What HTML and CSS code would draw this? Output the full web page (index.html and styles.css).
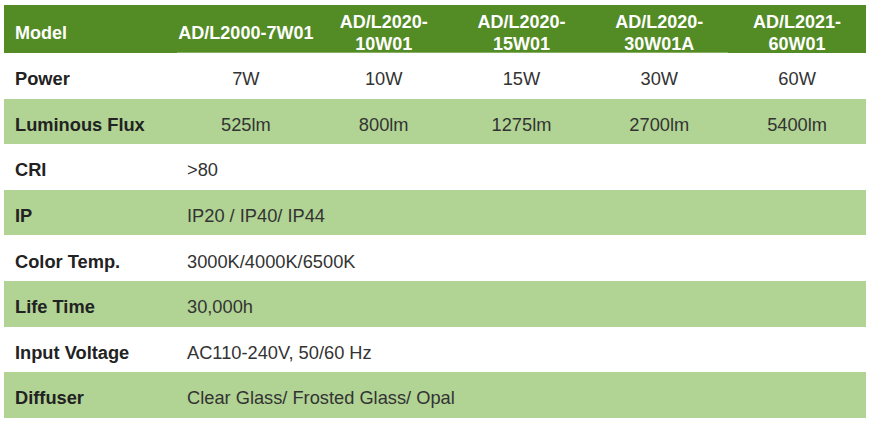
FILE: index.html
```html
<!DOCTYPE html>
<html>
<head>
<meta charset="utf-8">
<link rel="stylesheet" href="styles.css">
</head>
<body>
<table class="spec">
  <colgroup>
    <col class="c-label">
    <col class="c-val"><col class="c-val"><col class="c-val"><col class="c-val"><col class="c-val">
  </colgroup>
  <thead>
    <tr class="head">
      <th class="h-label"><div class="hd">Model</div></th>
      <th class="h-model line"><div class="hd">AD/L2000-7W01</div></th>
      <th class="h-model line"><div class="hd">AD/L2020-10W01</div></th>
      <th class="h-model line"><div class="hd">AD/L2020-15W01</div></th>
      <th class="h-model line"><div class="hd">AD/L2020-30W01A</div></th>
      <th class="h-model"><div class="hd">AD/L2021-60W01</div></th>
    </tr>
  </thead>
  <tbody>
    <tr class="white">
      <td class="label">Power</td>
      <td class="num">7W</td><td class="num">10W</td><td class="num">15W</td><td class="num">30W</td><td class="num">60W</td>
    </tr>
    <tr class="green">
      <td class="label">Luminous Flux</td>
      <td class="num">525lm</td><td class="num">800lm</td><td class="num">1275lm</td><td class="num">2700lm</td><td class="num">5400lm</td>
    </tr>
    <tr class="white">
      <td class="label">CRI</td>
      <td class="wide" colspan="5">&gt;80</td>
    </tr>
    <tr class="green">
      <td class="label">IP</td>
      <td class="wide" colspan="5">IP20 / IP40/ IP44</td>
    </tr>
    <tr class="white">
      <td class="label">Color Temp.</td>
      <td class="wide" colspan="5">3000K/4000K/6500K</td>
    </tr>
    <tr class="green">
      <td class="label">Life Time</td>
      <td class="wide" colspan="5">30,000h</td>
    </tr>
    <tr class="white">
      <td class="label">Input Voltage</td>
      <td class="wide" colspan="5">AC110-240V, 50/60 Hz</td>
    </tr>
    <tr class="green">
      <td class="label">Diffuser</td>
      <td class="wide" colspan="5">Clear Glass/ Frosted Glass/ Opal</td>
    </tr>
  </tbody>
</table>
</body>
</html>
```
FILE: styles.css
```css
html, body {
  margin: 0;
  padding: 0;
  background: #ffffff;
}

.spec {
  margin: 5px 0 0 4px;
  width: 862px;
  border-collapse: collapse;
  border-spacing: 0;
  table-layout: fixed;
  font-family: "Liberation Sans", Arial, sans-serif;
  font-size: 18.25px;
}

.c-label { width: 173px; }
.c-val { width: 137.8px; }

.head {
  background: #538b24;
  color: #ffffff;
}

.head th {
  padding: 8px 0 0 0;
  font-weight: bold;
  font-size: 18px;
  line-height: 22px;
  vertical-align: top;
  text-align: center;
}

.hd {
  height: 40px;
  display: flex;
  align-items: center;
  justify-content: center;
}

.head th.h-label {
  text-align: left;
  padding-left: 11px;
}

.head th.h-label .hd {
  justify-content: flex-start;
}

.head th.line {
  box-shadow: inset 0 -1px 0 #86b062;
}

.white { background: #ffffff; }
.green { background: #b1d394; }

tbody tr { height: 45.6px; }

tbody td {
  padding: 6px 0 0 0;
  vertical-align: middle;
  color: #333333;
  line-height: 21px;
}

td.label {
  font-weight: bold;
  color: #222222;
  padding-left: 11px;
}

td.num { text-align: center; }

td.wide {
  text-align: left;
  padding-left: 10px;
}
```
